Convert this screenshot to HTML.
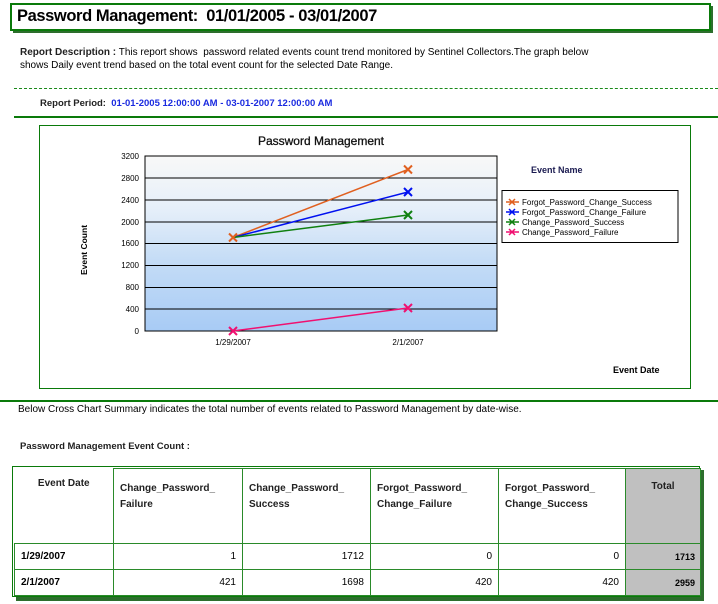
<!DOCTYPE html>
<html><head><meta charset="utf-8"><style>
body{margin:0;width:718px;height:604px;background:#fff;font-family:"Liberation Sans",Arial,sans-serif;position:relative;overflow:hidden;color:#000}
.a{position:absolute}
td{border:1px solid #2a8a2a;font-size:10px;padding:0}
</style></head><body>
<div class="a" style="left:13px;top:6px;width:700px;height:27px;background:#2d6e2d"></div>
<div class="a" style="left:10px;top:3px;width:697px;height:24px;border:2px solid #0a7a0a;background:#fff"></div>
<div class="a" style="left:17px;top:7px;font-size:16.5px;font-weight:bold;letter-spacing:-0.4px">Password Management:&nbsp; 01/01/2005 - 03/01/2007</div>
<div class="a" style="left:20px;top:46px;font-size:10px;line-height:13px;width:614px"><b style="font-weight:bold;color:#222">Report Description :</b> This report shows&nbsp; password related events count trend monitored by Sentinel Collectors.The graph below<br>shows Daily event trend based on the total event count for the selected Date Range.</div>
<div class="a" style="left:14px;top:88px;width:704px;border-top:1px dashed #1a8a1a"></div>
<div class="a" style="left:40px;top:98px;font-size:9.5px;font-weight:bold;color:#222">Report Period:&nbsp; <span style="color:#1a2ae0">01-01-2005 12:00:00 AM - 03-01-2007 12:00:00 AM</span></div>
<div class="a" style="left:14px;top:116px;width:704px;height:2px;background:#0a7a0a"></div>
<div class="a" style="left:39px;top:125px;width:650px;height:262px;border:1px solid #0a7a0a"></div>
<svg class="a" style="left:0;top:0" width="718" height="400">
<defs><linearGradient id="g" x1="0" y1="0" x2="0" y2="1"><stop offset="0" stop-color="#f8f8f8"/><stop offset="0.3" stop-color="#e6eff9"/><stop offset="0.6" stop-color="#c4dcf6"/><stop offset="1" stop-color="#a8cbf5"/></linearGradient></defs>
<rect x="145" y="156" width="352" height="175" fill="url(#g)" stroke="#000"/>
<g stroke="#000" stroke-width="1">
<line x1="145" y1="178" x2="497" y2="178"/><line x1="145" y1="200" x2="497" y2="200"/><line x1="145" y1="222" x2="497" y2="222"/><line x1="145" y1="243.5" x2="497" y2="243.5"/><line x1="145" y1="265.5" x2="497" y2="265.5"/><line x1="145" y1="287.5" x2="497" y2="287.5"/><line x1="145" y1="309" x2="497" y2="309"/></g>
<g font-size="8" text-anchor="end" font-family="Liberation Sans,sans-serif">
<text x="139" y="159">3200</text><text x="139" y="181">2800</text><text x="139" y="203">2400</text><text x="139" y="225">2000</text><text x="139" y="246">1600</text><text x="139" y="268">1200</text><text x="139" y="290">800</text><text x="139" y="312">400</text><text x="139" y="334">0</text></g>
<g font-size="8" text-anchor="middle" font-family="Liberation Sans,sans-serif"><text x="233" y="345">1/29/2007</text><text x="408" y="345">2/1/2007</text></g>
<text x="321" y="145" font-size="12" text-anchor="middle" font-family="Liberation Sans,sans-serif" fill="#111" stroke="#111" stroke-width="0.3">Password Management</text>
<text transform="translate(87,250) rotate(-90)" font-size="8.5" font-weight="bold" text-anchor="middle" font-family="Liberation Sans,sans-serif">Event Count</text>
<g stroke-width="1.5" fill="none">
<polyline points="233,237.5 408,169.5" stroke="#e06020"/>
<polyline points="233,237.5 408,192" stroke="#0010f0"/>
<polyline points="233,237.5 408,215" stroke="#108010"/>
<polyline points="233,331 408,308" stroke="#f01070"/>
</g>
<g stroke-width="2">
<path d="M229,233.5l8,8M237,233.5l-8,8M404,165.5l8,8M412,165.5l-8,8" stroke="#e06020"/>
<path d="M404,188l8,8M412,188l-8,8" stroke="#0010f0"/>
<path d="M404,211l8,8M412,211l-8,8" stroke="#108010"/>
<path d="M229,327l8,8M237,327l-8,8M404,304l8,8M412,304l-8,8" stroke="#f01070"/>
</g>
<text x="531" y="173" font-size="9" font-weight="bold" fill="#1a1a50" font-family="Liberation Sans,sans-serif">Event Name</text>
<rect x="502" y="190.5" width="176" height="52" fill="#fff" stroke="#000"/>
<g stroke-width="1.5">
<path d="M506,202h13M509,199l6,6M515,199l-6,6" stroke="#e06020"/>
<path d="M506,212h13M509,209l6,6M515,209l-6,6" stroke="#0010f0"/>
<path d="M506,222h13M509,219l6,6M515,219l-6,6" stroke="#108010"/>
<path d="M506,232h13M509,229l6,6M515,229l-6,6" stroke="#f01070"/>
</g>
<g font-size="8" font-family="Liberation Sans,sans-serif"><text x="522" y="205">Forgot_Password_Change_Success</text><text x="522" y="215">Forgot_Password_Change_Failure</text><text x="522" y="225">Change_Password_Success</text><text x="522" y="235">Change_Password_Failure</text></g>
<text x="613" y="373" font-size="9" font-weight="bold" font-family="Liberation Sans,sans-serif">Event Date</text>
</svg>
<div class="a" style="left:0;top:400px;width:718px;height:2px;background:#0a7a0a"></div>
<div class="a" style="left:18px;top:404px;font-size:10px">Below Cross Chart Summary indicates the total number of events related to Password Management by date-wise.</div>
<div class="a" style="left:20px;top:441px;font-size:9.5px;font-weight:bold;color:#222">Password Management Event Count :</div>
<div class="a" style="left:16px;top:470px;width:688px;height:131px;background:#2d6e2d"></div>
<div class="a" style="left:12px;top:466px;width:686px;height:129px;border:1px solid #0a7a0a;background:#fff"></div>
<table class="a" style="left:14px;top:468px;width:686px;border-collapse:collapse;table-layout:fixed">
<colgroup><col style="width:99px"><col style="width:129px"><col style="width:128px"><col style="width:128px"><col style="width:127px"><col style="width:75px"></colgroup>
<tr style="height:75px;vertical-align:top;font-weight:bold;color:#222">
<td style="text-align:center;padding-top:9px;border-top:none;border-left:none">Event Date</td>
<td style="padding:12px 6px;line-height:16px;border-left:1px solid #000">Change_Password_<br>Failure</td>
<td style="padding:12px 6px;line-height:16px">Change_Password_<br>Success</td>
<td style="padding:12px 6px;line-height:16px">Forgot_Password_<br>Change_Failure</td>
<td style="padding:12px 6px;line-height:16px">Forgot_Password_<br>Change_Success</td>
<td style="text-align:center;padding-top:12px;background:#c0c0c0">Total</td></tr>
<tr style="height:26px;text-align:right"><td style="text-align:left;padding-left:6px;font-weight:bold">1/29/2007</td><td style="padding-right:6px">1</td><td style="padding-right:6px">1712</td><td style="padding-right:6px">0</td><td style="padding-right:6px">0</td><td style="background:#c0c0c0;font-weight:bold;font-size:9px;padding-right:5px">1713</td></tr>
<tr style="height:26px;text-align:right"><td style="text-align:left;padding-left:6px;font-weight:bold">2/1/2007</td><td style="padding-right:6px">421</td><td style="padding-right:6px">1698</td><td style="padding-right:6px">420</td><td style="padding-right:6px">420</td><td style="background:#c0c0c0;font-weight:bold;font-size:9px;padding-right:5px">2959</td></tr>
</table>
</body></html>
